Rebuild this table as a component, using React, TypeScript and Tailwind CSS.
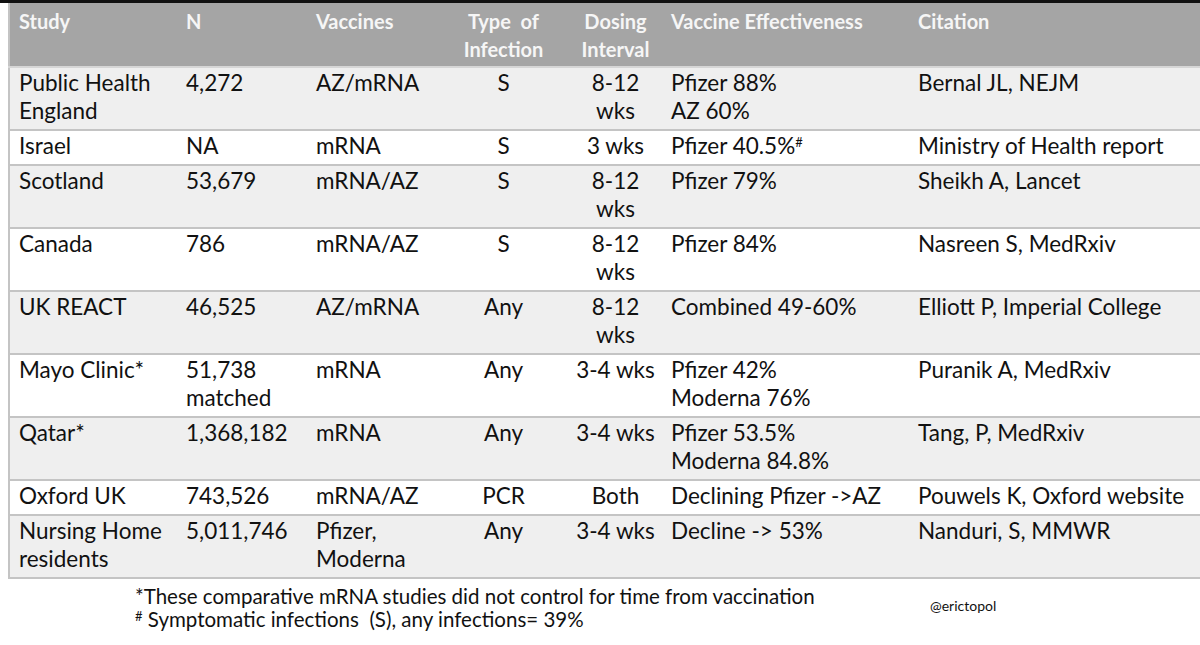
import React from "react";

type Row = {
  study: string[];
  n: string[];
  vaccines: string[];
  type: string;
  dosing: string[];
  ve: React.ReactNode[];
  citation: string;
};

const rows: Row[] = [
  {
    study: ["Public Health", "England"],
    n: ["4,272"],
    vaccines: ["AZ/mRNA"],
    type: "S",
    dosing: ["8-12", "wks"],
    ve: ["Pfizer 88%", "AZ 60%"],
    citation: "Bernal JL, NEJM",
  },
  {
    study: ["Israel"],
    n: ["NA"],
    vaccines: ["mRNA"],
    type: "S",
    dosing: ["3 wks"],
    ve: [
      <>
        Pfizer 40.5%<span className="text-[13px] align-top leading-[20px]">#</span>
      </>,
    ],
    citation: "Ministry of Health report",
  },
  {
    study: ["Scotland"],
    n: ["53,679"],
    vaccines: ["mRNA/AZ"],
    type: "S",
    dosing: ["8-12", "wks"],
    ve: ["Pfizer 79%"],
    citation: "Sheikh A, Lancet",
  },
  {
    study: ["Canada"],
    n: ["786"],
    vaccines: ["mRNA/AZ"],
    type: "S",
    dosing: ["8-12", "wks"],
    ve: ["Pfizer 84%"],
    citation: "Nasreen S, MedRxiv",
  },
  {
    study: ["UK REACT"],
    n: ["46,525"],
    vaccines: ["AZ/mRNA"],
    type: "Any",
    dosing: ["8-12", "wks"],
    ve: ["Combined 49-60%"],
    citation: "Elliott P, Imperial College",
  },
  {
    study: ["Mayo Clinic*"],
    n: ["51,738", "matched"],
    vaccines: ["mRNA"],
    type: "Any",
    dosing: ["3-4 wks"],
    ve: ["Pfizer 42%", "Moderna 76%"],
    citation: "Puranik A, MedRxiv",
  },
  {
    study: ["Qatar*"],
    n: ["1,368,182"],
    vaccines: ["mRNA"],
    type: "Any",
    dosing: ["3-4 wks"],
    ve: ["Pfizer 53.5%", "Moderna 84.8%"],
    citation: "Tang, P, MedRxiv",
  },
  {
    study: ["Oxford UK"],
    n: ["743,526"],
    vaccines: ["mRNA/AZ"],
    type: "PCR",
    dosing: ["Both"],
    ve: ["Declining Pfizer ->AZ"],
    citation: "Pouwels K, Oxford website",
  },
  {
    study: ["Nursing Home", "residents"],
    n: ["5,011,746"],
    vaccines: ["Pfizer,", "Moderna"],
    type: "Any",
    dosing: ["3-4 wks"],
    ve: ["Decline -> 53%"],
    citation: "Nanduri, S, MMWR",
  },
];

const Lines = ({ items }: { items: React.ReactNode[] }) => (
  <>
    {items.map((t, i) => (
      <div key={i} className="whitespace-nowrap">
        {t}
      </div>
    ))}
  </>
);

export default function App() {
  const td = "align-top pt-[1px] pb-[4px] px-[9px]";
  const th = "align-top pt-[4px] pb-[3px] px-[9px] font-bold text-left whitespace-nowrap";
  return (
    <div
      className="w-[1200px] h-[645px] bg-white overflow-hidden relative text-[#111]"
      style={{ fontFamily: "Lato, 'Open Sans', sans-serif" }}
    >
      <div className="h-[3px] bg-[#111]" />
      <div className="pl-[8px] overflow-hidden">
        <table className="table-fixed border-collapse w-[1232px] border-l-2 border-[#c4c4c4]">
          <colgroup>
            <col className="w-[168px]" />
            <col className="w-[130px]" />
            <col className="w-[145px]" />
            <col className="w-[103px]" />
            <col className="w-[107px]" />
            <col className="w-[247px]" />
            <col className="w-[332px]" />
          </colgroup>
          <thead>
            <tr className="bg-[#a5a5a5] text-[#f6f6f6] text-[20px] leading-[28px] border-b-2 border-[#d6d6d6]">
              <th className={th}>Study</th>
              <th className={th}>N</th>
              <th className={th}>Vaccines</th>
              <th className={`${th} !text-center`}>
                <div>Type&nbsp; of</div>
                <div>Infection</div>
              </th>
              <th className={`${th} !text-center !pl-[18px] !pr-[4px]`}>
                <div>Dosing</div>
                <div>Interval</div>
              </th>
              <th className={th}>Vaccine Effectiveness</th>
              <th className={th}>Citation</th>
            </tr>
          </thead>
          <tbody>
            {rows.map((r, i) => (
              <tr
                key={i}
                className={`${i % 2 === 0 ? "bg-[#efefef]" : "bg-white"} border-b-2 border-[#c4c4c4] text-[22.5px] leading-[28px]`}
              >
                <td className={td}>
                  <Lines items={r.study} />
                </td>
                <td className={td}>
                  <Lines items={r.n} />
                </td>
                <td className={td}>
                  <Lines items={r.vaccines} />
                </td>
                <td className={`${td} text-center`}>{r.type}</td>
                <td className={`${td} text-center !pl-[18px] !pr-[4px]`}>
                  <Lines items={r.dosing} />
                </td>
                <td className={td}>
                  <Lines items={r.ve} />
                </td>
                <td className={`${td} whitespace-nowrap`}>{r.citation}</td>
              </tr>
            ))}
          </tbody>
        </table>
      </div>
      <div className="flex mt-[6px]">
        <div className="pl-[135px] text-[20.5px] leading-[23px] w-[880px] whitespace-nowrap">
          <div>*These comparative mRNA studies did not control for time from vaccination</div>
          <div>
            <span className="text-[13px] align-top leading-[16px]">#</span> Symptomatic infections&nbsp; (S), any infections= 39%
          </div>
        </div>
        <div className="pt-[10px] pl-[50px] text-[14px]">@erictopol</div>
      </div>
    </div>
  );
}
